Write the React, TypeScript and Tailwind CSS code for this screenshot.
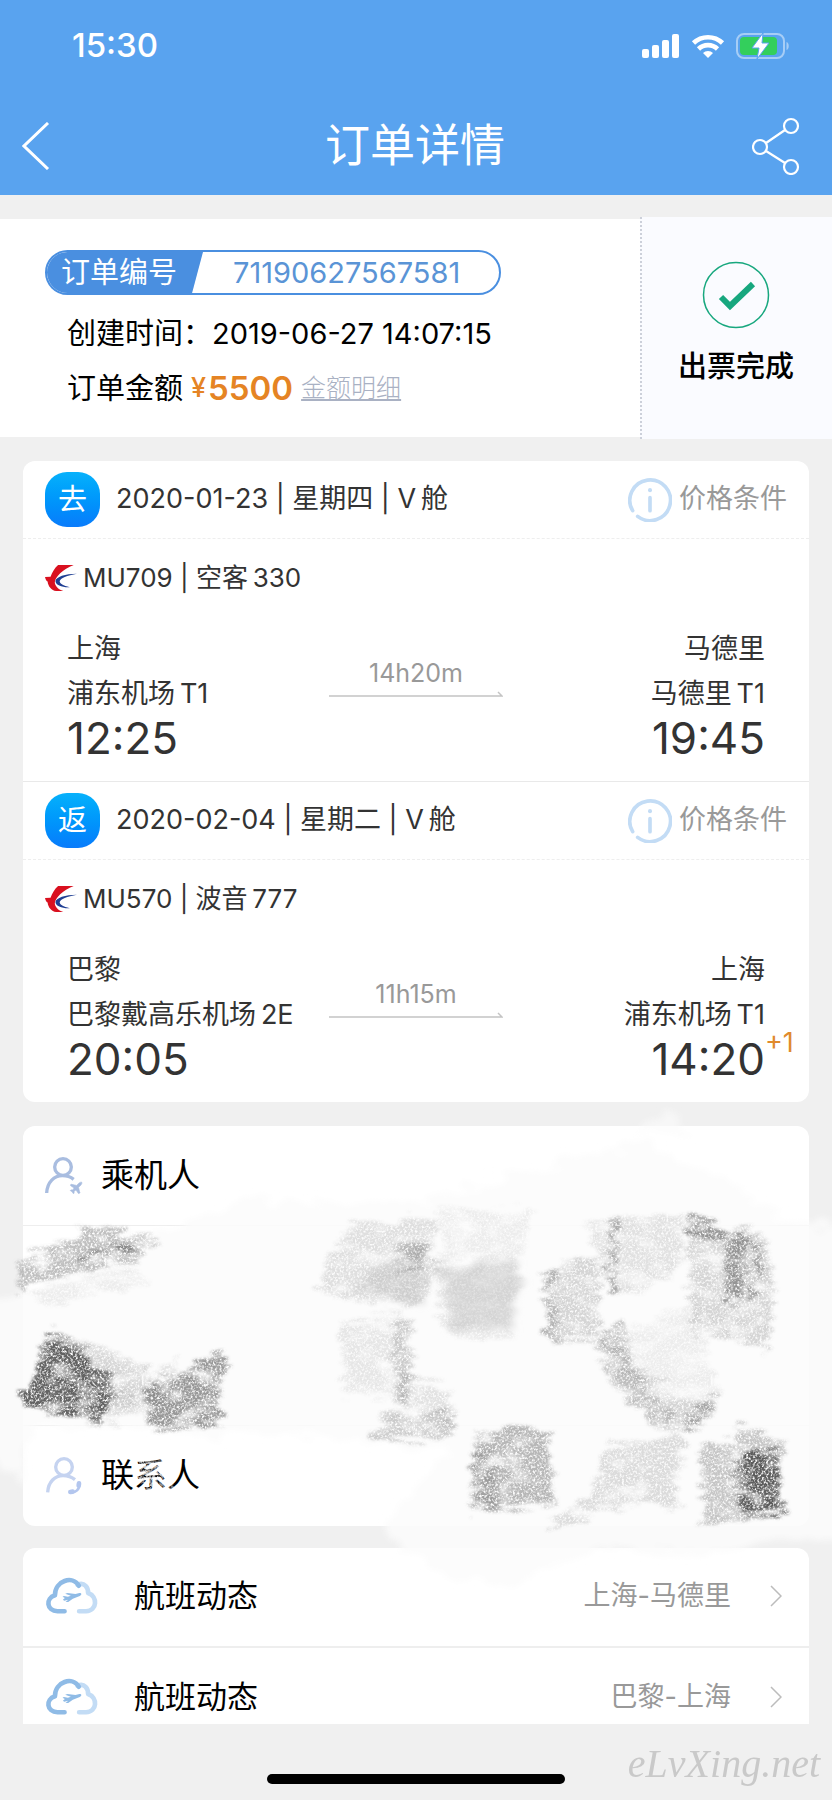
import { Plane } from "lucide-react";

type Place = { city: string; airport: string; time: string; plusDay?: string };

type Segment = {
  tag: string;
  date: string;
  flight: string;
  duration: string;
  from: Place;
  to: Place;
};

// \u2009 is the thin space between Chinese and Latin runs
const segments: Segment[] = [
  {
    tag: "去",
    date: "2020-01-23 | 星期四 | V\u2009舱",
    flight: "MU709 | 空客\u2009330",
    duration: "14h20m",
    from: { city: "上海", airport: "浦东机场\u2009T1", time: "12:25" },
    to: { city: "马德里", airport: "马德里\u2009T1", time: "19:45" },
  },
  {
    tag: "返",
    date: "2020-02-04 | 星期二 | V\u2009舱",
    flight: "MU570 | 波音\u2009777",
    duration: "11h15m",
    from: { city: "巴黎", airport: "巴黎戴高乐机场\u20092E", time: "20:05" },
    to: { city: "上海", airport: "浦东机场\u2009T1", time: "14:20", plusDay: "+1" },
  },
];

const routes = ["上海-马德里", "巴黎-上海"];

// Pencil strokes over the passenger details: [points, opacity]
const strokes: [string, number][] = [
  ["17,155 80,138 78,123 100,127 140,133 160,139 138,160 70,172 30,182 20,192", 0.35],
  ["80,150 140,142 138,151 85,158", 0.45],
  ["30,190 140,165 150,180 40,205", 0.08],
  ["45,232 60,230 80,243 88,262 115,270 115,290 100,325 18,302 30,280 42,255", 0.85],
  ["60,232 120,250 150,270 130,300 112,310", 0.2],
  ["140,285 195,262 228,245 222,275 224,300 224,325 150,325 148,300", 0.55],
  ["110,300 150,280 180,255 150,310 108,320", 0.16],
  ["310,190 330,150 350,122 440,115 430,150 440,165 420,200 390,203 350,197", 0.16],
  ["398,140 432,145 430,166 400,170", 0.25],
  ["340,222 402,208 408,300 370,290 345,295", 0.12],
  ["392,220 412,215 410,305 394,300", 0.2],
  ["370,325 400,308 455,310 455,335 420,338 370,333", 0.28],
  ["400,270 450,290 452,320 400,300", 0.15],
  ["440,108 530,106 525,155 440,158", 0.08],
  ["436,160 522,160 512,215 512,238 455,236 440,215", 0.1],
  ["545,163 600,158 600,235 545,242 548,220 548,180", 0.22],
  ["545,163 556,160 556,240 545,244", 0.25],
  ["585,118 680,112 684,160 650,190 610,188", 0.14],
  ["611,115 617,115 615,190 609,185", 0.4],
  ["685,120 764,135 775,175 768,250 740,240 692,228 690,180", 0.22],
  ["686,110 695,110 727,130 727,140 686,134", 0.45],
  ["728,127 750,128 742,200 722,200", 0.45],
  ["758,128 765,132 757,200 750,200", 0.45],
  ["597,237 625,220 632,262 650,300 680,315 715,295 725,300 690,330 655,325 630,300 605,270", 0.35],
  ["597,237 690,200 720,290 690,330 650,300", 0.08],
  ["635,262 670,290 715,298 690,330 680,315 650,300", 0.15],
  ["475,330 535,325 553,330 553,400 475,410 470,408 478,390 474,370", 0.38],
  ["474,350 494,345 494,408 470,408", 0.25],
  ["605,345 680,330 685,345 675,400 690,405 600,405 555,425 550,420 590,395", 0.18],
  ["735,323 785,340 780,355 785,385 783,413 700,425 705,400 700,375 700,345 735,340", 0.3],
  ["742,350 775,350 785,385 780,413 740,408 732,380", 0.85],
];

function Scribbles() {
  return (
    <svg
      viewBox="0 0 832 500"
      className="pointer-events-none absolute -top-6 left-0 w-full"
      aria-hidden="true"
    >
      <defs>
        <filter id="pencil" x="-10%" y="-10%" width="120%" height="120%">
          <feTurbulence type="fractalNoise" baseFrequency="0.03 0.16" numOctaves="3" seed="4" result="warp" />
          <feDisplacementMap in="SourceGraphic" in2="warp" scale="28" xChannelSelector="R" yChannelSelector="G" result="rough" />
          <feGaussianBlur in="rough" stdDeviation="1.5" result="soft" />
          <feTurbulence type="fractalNoise" baseFrequency="0.45" numOctaves="3" seed="9" />
          <feColorMatrix values="0 0 0 0 0  0 0 0 0 0  0 0 0 0 0  3 0 0 0 -0.7" result="grain" />
          <feTurbulence type="fractalNoise" baseFrequency="0.04 0.06" numOctaves="4" seed="21" />
          <feColorMatrix values="0 0 0 0 0  0 0 0 0 0  0 0 0 0 0  0 2.4 0 0 -0.3" result="cloud" />
          <feComposite in="soft" in2="grain" operator="in" />
          <feComposite in2="cloud" operator="in" />
        </filter>
        <filter id="haze" x="-10%" y="-10%" width="120%" height="120%">
          <feTurbulence type="fractalNoise" baseFrequency="0.03 0.08" numOctaves="3" seed="2" result="warp" />
          <feDisplacementMap in="SourceGraphic" in2="warp" scale="30" xChannelSelector="R" yChannelSelector="G" />
          <feGaussianBlur stdDeviation="3" />
        </filter>
      </defs>
      <g fill="#fbfbfb" filter="url(#haze)">
        <path d="M-20 200 25 190 240 100 420 100 560 60 640 40 800 120 850 130 850 440 780 440 690 455 600 445 530 475 460 480 400 450 380 430 450 345 300 335 30 325 24 385-20 350Z" opacity=".85" />
        <path d="M630 30 670 6 700 32Z" opacity=".6" />
      </g>
      <g fill="#dadada" filter="url(#haze)">
        <path d="M440 166 518 162 514 232 450 230Z" opacity=".7" />
        <path d="M345 185 420 150 425 198 390 202Z" opacity=".6" />
      </g>
      <g fill="#484848" filter="url(#pencil)">
        {strokes.map(([points, opacity]) => (
          <polygon key={points} points={points} opacity={opacity} />
        ))}
      </g>
      <path d="M134 356 166 352 170 390 146 392Z" fill="#fff" opacity=".8" filter="url(#pencil)" />
    </svg>
  );
}

function StatusIcons() {
  return (
    <svg viewBox="0 0 148 28" className="h-7 w-[148px]" aria-hidden="true">
      <g fill="#fff">
        <rect x="0" y="17" width="7" height="9" rx="2" />
        <rect x="10" y="13" width="7" height="13" rx="2" />
        <rect x="20" y="8" width="7" height="18" rx="2" />
        <rect x="30" y="2" width="7" height="24" rx="2" />
        <path d="M66 26 61 21a7 7 0 0 1 10 0Z" />
      </g>
      <g fill="none" stroke="#fff" strokeWidth="4.6">
        <path d="M51.500 11a21 21 0 0 1 29 0" />
        <path d="M56.500 17a13.500 13.500 0 0 1 19 0" />
      </g>
      <rect x="95" y="2" width="47" height="24" rx="7" fill="none" stroke="#a6cdf6" strokeWidth="2" />
      <path d="M144.500 10c3 1 3 7 0 8Z" fill="#a6cdf6" />
      <rect x="98" y="5" width="37" height="18" rx="4" fill="#33cf5c" />
      <path d="M121 1 110 16h7l-2 11 12-16h-7Z" fill="#fff" stroke="#59a3ef" strokeWidth="1" />
    </svg>
  );
}

function ShareIcon() {
  return (
    <svg viewBox="0 0 48 58" className="h-[58px] w-12" fill="none" stroke="currentColor" strokeWidth="2.200" aria-hidden="true">
      <circle cx="39" cy="9" r="7" />
      <circle cx="8" cy="30" r="7" />
      <circle cx="39" cy="50" r="7" />
      <path d="M14 26 33 13M14 34 33 46" />
    </svg>
  );
}

function InfoIcon() {
  return (
    <svg viewBox="0 0 132 132" className="size-11" fill="none" stroke="#c3dcf5" strokeLinecap="round" aria-hidden="true">
      <path d="M14 98A61 61 0 1 1 29 115" strokeWidth="11" />
      <path d="M66 59V98" strokeWidth="11" />
      <path d="M66 36V37" strokeWidth="12" />
    </svg>
  );
}

function AirlineLogo() {
  return (
    <svg viewBox="0 0 98 82" className="h-7 w-8" aria-hidden="true">
      <path d="M88 1H40C29 10 22 24 17 37L0 38C2 46 4 50 8 52 9 66 20 80 34 81H56C40 76 30 64 30 54 31 38 54 14 88 1Z" fill="#d9101f" />
      <path d="M98 28C62 28 33 38 32 50 33 63 52 70 76 69 56 65 45 58 45 51 46 42 68 33 98 28Z" fill="#1f3f93" />
    </svg>
  );
}

function PassengerIcon() {
  return (
    <svg viewBox="0 0 114 114" className="size-[38px]" fill="none" stroke="#a9bde0" aria-hidden="true">
      <circle cx="54" cy="30" r="25" strokeWidth="10" />
      <path d="M5 108C7 74 28 56 52 56c14 0 24 3 34 11" strokeWidth="10" />
      <Plane x="70" y="70" width="46" height="46" strokeWidth="1" fill="#a9bde0" color="#a9bde0" />
    </svg>
  );
}

function ContactIcon() {
  return (
    <svg viewBox="0 0 114 114" className="size-[38px]" fill="none" stroke="#c5d3f0" aria-hidden="true">
      <circle cx="57" cy="30" r="25" strokeWidth="10" />
      <path d="M8 106C10 74 30 56 54 56c14 0 26 4 36 12" strokeWidth="10" />
      <path d="M78 106C92 108 104 96 103 82" stroke="#b3c6ee" strokeWidth="8" />
      <path d="M76 105l7-1M102 79l-1 7" stroke="#b3c6ee" strokeWidth="14" strokeLinecap="round" />
    </svg>
  );
}

function CloudIcon() {
  return (
    <svg viewBox="0 0 160 114" className="h-[38px] w-[53px]" fill="none" strokeWidth="14" aria-hidden="true">
      <path d="M98 23C120 14 131 32 130 48 160 58 158 102 124 103H103" stroke="#c3dcf5" strokeLinecap="round" strokeLinejoin="round" />
      <path d="M59 103H38C4 102 1 64 30 55 30 10 84-6 102 26" stroke="#8fbbe6" strokeLinecap="round" strokeLinejoin="round" />
      <path d="M54 68 60 63 53 59 57 57 69 59 78 56 61 50 68 48 92 51 104 48C112 48 111 54 105 57L84 65 70 75H62L70 68 58 71Z" fill="#8fbbe6" />
    </svg>
  );
}

function Chevron() {
  return (
    <svg viewBox="0 0 12 22" className="h-[22px] w-3" fill="none" stroke="#bcbcbc" strokeWidth="1.500" aria-hidden="true">
      <path d="M1 1 11 11 1 21" />
    </svg>
  );
}

function FlightSegment({ segment }: { segment: Segment }) {
  const { tag, date, flight, duration, from, to } = segment;
  return (
    <article className="text-[27px] text-[#333]">
      <div className="flex h-[78px] items-center border-b border-dashed border-[#eee] px-[22px]">
        <span className="flex size-[55px] items-center justify-center rounded-[22px] bg-linear-to-b from-[#08b1fb] to-[#0a7bfb] text-[29px] text-white">
          {tag}
        </span>
        <h2 className="ml-4">{date}</h2>
        <button type="button" className="ml-auto flex items-center gap-[7px] text-[#999]">
          <InfoIcon />
          价格条件
        </button>
      </div>
      <p className="flex h-[77px] items-center gap-1.5 px-[22px] text-[26px]">
        <AirlineLogo />
        {flight}
      </p>
      <div className="grid grid-cols-[1fr_174px_1fr] px-[44px] pt-2.5 pb-5">
        <div className="whitespace-nowrap">
          <p className="leading-[45px]">{from.city}</p>
          <p className="leading-[45px]">{from.airport}</p>
          <p className="text-[44px] leading-[45px]">{from.time}</p>
        </div>
        <div className="pt-[29px] text-center text-[25px] text-[#999]">
          <p className="leading-9">{duration}</p>
          <svg viewBox="0 0 174 8" className="h-2 w-full" fill="none" stroke="#c4c4c4" strokeWidth="1.500" aria-hidden="true">
            <path d="M0 5H173L169 1" />
          </svg>
        </div>
        <div className="text-right whitespace-nowrap">
          <p className="leading-[45px]">{to.city}</p>
          <p className="leading-[45px]">{to.airport}</p>
          <p className="relative text-[44px] leading-[45px]">
            {to.time}
            {to.plusDay && (
              <sup className="absolute -top-2 left-full text-[27px] leading-none text-[#e08a2c]">{to.plusDay}</sup>
            )}
          </p>
        </div>
      </div>
    </article>
  );
}

export default function App() {
  return (
    <div className="flex h-screen flex-col bg-[#f0f0f0] font-['Inter','Noto_Sans_CJK_SC',sans-serif] text-black">
      <header className="bg-[#59a3ef] text-white">
        <div className="flex h-[92px] items-center justify-between pr-[42px] pl-[72px]">
          <time className="text-[33px] font-medium">15:30</time>
          <StatusIcons />
        </div>
        <div className="flex h-[103px] items-center justify-between pt-1 pr-8 pl-[22px]">
          <button type="button" aria-label="返回" className="w-14">
            <svg viewBox="0 0 28 48" className="h-12 w-7" fill="none" stroke="currentColor" strokeWidth="3" aria-hidden="true">
              <path d="M26 1 2 24 26 47" />
            </svg>
          </button>
          <h1 className="text-[45px] font-normal">订单详情</h1>
          <button type="button" aria-label="分享" className="w-12">
            <ShareIcon />
          </button>
        </div>
      </header>

      <main className="min-h-0 flex-1 overflow-y-auto [scrollbar-width:none]">
        {/* Order summary */}
        <section className="mt-[22px] flex items-center">
          <div className="h-[218px] flex-1 bg-white pt-[31px] pl-[45px]">
            <div className="flex h-[45px] w-[456px] overflow-hidden rounded-full border-2 border-[#4a8fe0] text-[29px] leading-[42px]">
              <span className="w-[156px] bg-[#4a8fe0] pl-3.5 text-white [clip-path:polygon(0_0,100%_0,93%_100%,0_100%)]">
                订单编号
              </span>
              <span className="flex-1 pl-[30px] text-[#5a94d6]">71190627567581</span>
            </div>
            <dl className="ml-[22px] text-[29px]">
              <div className="mt-[11px] flex h-[55px] items-center">
                <dt>创建时间：</dt>
                <dd>2019-06-27 14:07:15</dd>
              </div>
              <div className="flex h-[55px] items-center">
                <dt>订单金额</dt>
                <dd className="ml-2 flex items-center font-semibold text-[#e58424]">
                  <span className="text-[27px] font-medium">¥</span>
                  <span className="ml-0.5 text-[33px]">5500</span>
                  <a href="#price" className="ml-2 text-[25px] font-light text-[#a9b1c3] underline underline-offset-2">
                    金额明细
                  </a>
                </dd>
              </div>
            </dl>
          </div>
          <div className="flex h-[222px] w-[192px] flex-col items-center border-l-2 border-dotted border-[#ccd0da] bg-[#fafbff] pt-11 pr-0.5">
            <svg viewBox="0 0 68 68" className="size-[68px]" fill="none" stroke="#17a77e" aria-hidden="true">
              <circle cx="34" cy="34" r="32.500" strokeWidth="1.500" />
              <path d="M19 36 28 45 51 23" strokeWidth="6" />
            </svg>
            <p className="mt-4 text-[29px] font-medium">出票完成</p>
          </div>
        </section>

        {/* Flights */}
        <section className="mx-[23px] mt-[22px] divide-y divide-[#e9e9e9] rounded-xl bg-white">
          {segments.map((segment) => (
            <FlightSegment key={segment.tag} segment={segment} />
          ))}
        </section>

        {/* Passengers and contact */}
        <section className="relative mt-6">
          <div className="mx-[23px] rounded-xl bg-white text-[33px]">
            <h2 className="flex h-[100px] items-center gap-[18px] border-b border-[#eee] px-[22px]">
              <PassengerIcon />
              乘机人
            </h2>
            <div className="h-[200px] border-b border-[#eee]" />
            <h2 className="flex h-[100px] items-center gap-[18px] px-[22px]">
              <ContactIcon />
              联系人
            </h2>
          </div>
          <Scribbles />
        </section>

        {/* Flight status */}
        <section className="mx-[23px] mt-[22px] divide-y-2 divide-[#eee] rounded-xl bg-white">
          {routes.map((route) => (
            <a key={route} href="#status" className="flex h-[100px] items-center pr-[27px] pb-0.5 pl-[22px]">
              <CloudIcon />
              <span className="ml-9 text-[31px]">航班动态</span>
              <span className="mr-[39px] ml-auto text-[27px] text-[#999]">{route}</span>
              <Chevron />
            </a>
          ))}
        </section>
      </main>

      <footer className="relative h-[76px] shrink-0 pt-[50px]">
        <div className="mx-auto h-2.5 w-[298px] rounded-full bg-black" />
        <span className="absolute right-3 bottom-4 font-['Liberation_Serif',serif] text-[40px] leading-none text-[#c9c9c9] italic">
          eLvXing.net
        </span>
      </footer>
    </div>
  );
}
